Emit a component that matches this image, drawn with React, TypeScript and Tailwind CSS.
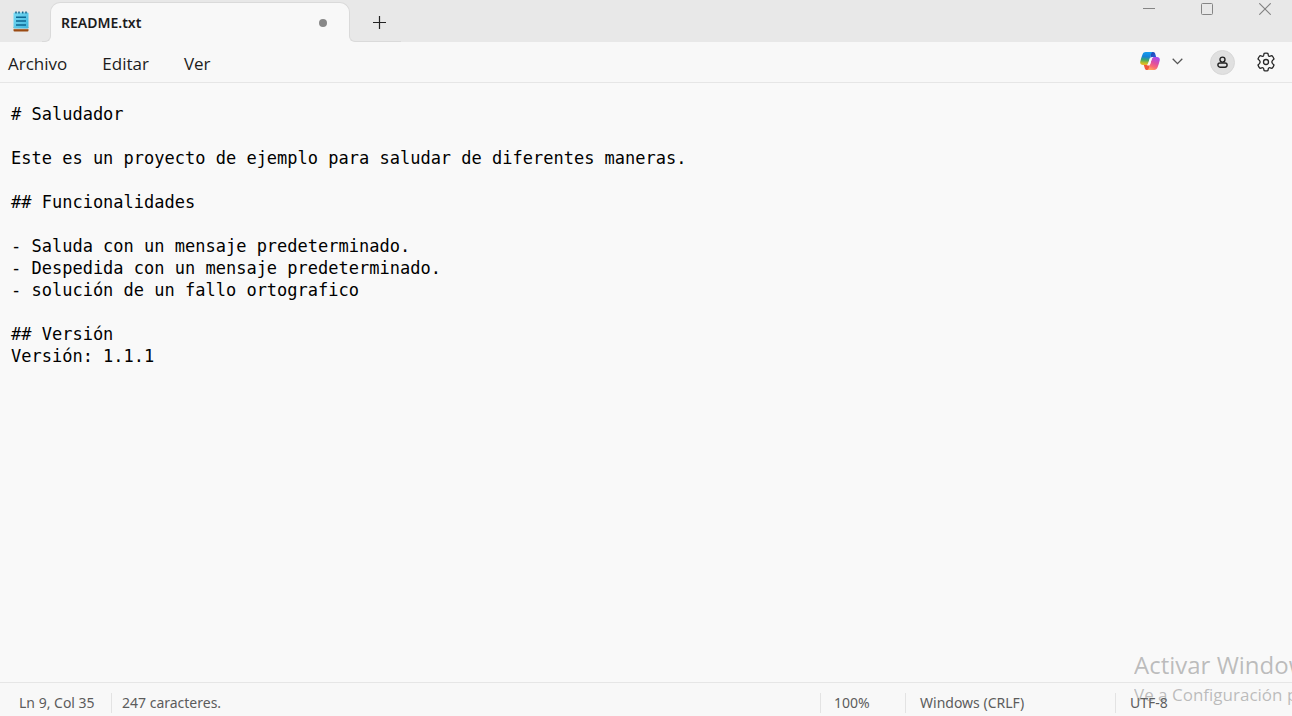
import { useState } from "react";
import type { ReactNode } from "react";

const initialText = `# Saludador

Este es un proyecto de ejemplo para saludar de diferentes maneras.

## Funcionalidades

- Saluda con un mensaje predeterminado.
- Despedida con un mensaje predeterminado.
- solución de un fallo ortografico

## Versión
Versión: 1.1.1`;

function NotepadIcon() {
  return (
    <svg width="16" height="21" viewBox="0 0 16 21" aria-hidden="true">
      <defs>
        <linearGradient id="paper" x1="0" y1="0" x2="1" y2="1">
          <stop offset="0" stopColor="#7adcf5" />
          <stop offset="1" stopColor="#3fb4dc" />
        </linearGradient>
      </defs>
      <rect x="0.5" y="16" width="15" height="4.5" rx="1" fill="#9a4a12" />
      <rect x="0" y="17" width="16" height="1.2" fill="#e8e0d8" />
      <rect x="0.5" y="1.5" width="15" height="16" rx="1" fill="url(#paper)" />
      <path d="M3 0.5v2M6 0.5v2M9.7 0.5v2M13 0.5v2" stroke="#14648c" strokeWidth="1.5" />
      <path d="M3 6.2h10M3 10h10M3 14h10" stroke="#0c6691" strokeWidth="1.6" />
    </svg>
  );
}

function CopilotIcon() {
  return (
    <svg width="20" height="20" viewBox="0 0 20 20" aria-hidden="true">
      <defs>
        <linearGradient id="cpLeft" x1="0.4" y1="0" x2="0.3" y2="1">
          <stop offset="0" stopColor="#159cf0" />
          <stop offset="0.35" stopColor="#1583d8" />
          <stop offset="0.6" stopColor="#3ba66e" />
          <stop offset="0.85" stopColor="#c5bd22" />
          <stop offset="1" stopColor="#f0b52c" />
        </linearGradient>
        <linearGradient id="cpRight" x1="0.7" y1="0" x2="0.3" y2="1">
          <stop offset="0" stopColor="#a64bf0" />
          <stop offset="0.45" stopColor="#df4f9f" />
          <stop offset="0.75" stopColor="#fb6c73" />
          <stop offset="1" stopColor="#ffac5a" />
        </linearGradient>
        <linearGradient id="cpFold" x1="0" y1="0" x2="1" y2="1">
          <stop offset="0" stopColor="#1c3fae" />
          <stop offset="1" stopColor="#2a67e0" />
        </linearGradient>
      </defs>
      <path d="M10 1h3.2c1.2 0 1.7.8 2 1.8l1 3.2h-3.2c-1.300 0-2 .7-2.400 2z" fill="url(#cpFold)" />
      <path d="M10 19H6.900c-1.200 0-1.800-.8-2.100-1.800L3.800 14H7c1.300 0 2-.7 2.400-2z" fill="#f2563a" />
      <path d="M5.700 1h7.200c-1 .2-1.500 1-1.900 2.200L8.300 11.700C7.700 13.500 7 14 5.400 14H3C.9 14-.2 12.600.3 10.500.8 8.200 1.600 5.700 2.500 3.400 3.200 1.700 4.200 1 5.700 1z" fill="url(#cpLeft)" />
      <path d="M14.300 19H7.100c1-.2 1.500-1 1.900-2.200l2.700-8.500C12.300 6.500 13 6 14.600 6H17c2.100 0 3.200 1.400 2.700 3.500-.5 2.300-1.300 4.800-2.200 7.100-.7 1.700-1.700 2.400-3.200 2.400z" fill="url(#cpRight)" />
      <path d="M12.300 6.200h1.500c-1.300.3-1.800 1-2.200 2.300l-1.500 4.700c-.3.900-1 1.300-1.800 1.300H6.700c1-.4 1.400-1.100 1.700-2.100l1.400-4.300c.4-1.300 1.100-1.900 2.500-1.900z" fill="#fafafa" />
    </svg>
  );
}

function GearIcon() {
  return (
    <svg width="20" height="20" viewBox="0 0 20 20" fill="none" stroke="#262626" strokeWidth="1.300" strokeLinejoin="round" aria-hidden="true">
      <path d="M8.100 1.400 Q10 1 11.900 1.400 L12.300 3.200 Q12.700 4.600 14.200 4.200 L16 3.600 Q17.400 5 18 7 L16.600 8.400 Q15.200 10 16.600 11.600 L18 13 Q17.400 15 16 16.400 L14.200 15.800 Q12.700 15.400 12.300 16.800 L11.900 18.600 Q10 19 8.100 18.600 L7.700 16.800 Q7.300 15.400 5.800 15.800 L4 16.400 Q2.600 15 2 13 L3.400 11.600 Q4.800 10 3.400 8.400 L2 7 Q2.600 5 4 3.600 L5.800 4.200 Q7.300 4.600 7.700 3.200 Z" />
      <circle cx="10" cy="10" r="2.500" />
    </svg>
  );
}

function StatusItem({ className, children }: { className: string; children: ReactNode }) {
  return (
    <div className={`flex h-5 items-center whitespace-nowrap ${className}`}>
      <span>{children}</span>
    </div>
  );
}

function TitleBar() {
  return (
    <header className="flex h-[42px] shrink-0 items-start bg-[#e8e8e8]">
      <div className="flex h-full w-[42px] items-center justify-center pt-px">
        <NotepadIcon />
      </div>
      <div className="flex h-full items-end">
        <div className="z-10 -mr-px h-2 w-[9px] bg-[#f8f8f8]">
          <div className="h-full rounded-br-md border-r border-b border-[#dadada] bg-[#e8e8e8]" />
        </div>
        <div className="flex h-10 w-[300px] items-center justify-between rounded-t-[10px] border-x border-t border-[#dadada] bg-[#f8f8f8] pr-[22px] pl-[10px]">
          <span className="text-[14px] leading-5 font-semibold text-[#1c1c1c]">README.txt</span>
          <span className="size-2 rounded-full bg-[#888888]" />
        </div>
        <div className="z-10 -ml-px h-2 w-[9px] bg-[#f8f8f8]">
          <div className="h-full rounded-bl-md border-b border-l border-[#dadada] bg-[#e8e8e8]" />
        </div>
        <button aria-label="Nueva pestaña" className="flex h-full w-[43px] items-center border-b border-[#dadada] pt-1 pl-[15px]">
          <svg width="13" height="13" viewBox="0 0 13 13" aria-hidden="true">
            <path d="M0 6.500h13M6.500 0v13" stroke="#222222" strokeWidth="1.200" />
          </svg>
        </button>
      </div>
      <div className="-mr-0.5 ml-auto flex">
        <button aria-label="Minimizar" className="flex h-[18px] w-[58px] items-center justify-center">
          <svg width="12" height="12" viewBox="0 0 12 12" aria-hidden="true">
            <path d="M0 5.500h12" stroke="#858585" />
          </svg>
        </button>
        <button aria-label="Maximizar" className="flex h-[18px] w-[58px] items-center justify-center">
          <svg width="12" height="12" viewBox="0 0 12 12" aria-hidden="true">
            <rect x="0.500" y="0.500" width="11" height="11" rx="1" fill="none" stroke="#858585" />
          </svg>
        </button>
        <button aria-label="Cerrar" className="flex h-[18px] w-[58px] items-center justify-center">
          <svg width="12" height="12" viewBox="0 0 12 12" aria-hidden="true">
            <path d="M0.300 0.300l11.400 11.400M11.700 0.300L0.300 11.700" stroke="#808080" strokeWidth="1.100" />
          </svg>
        </button>
      </div>
    </header>
  );
}

function MenuBar() {
  return (
    <div className="flex h-[41px] shrink-0 items-center border-b border-[#e6e6e6] bg-[#f8f8f8]">
      <nav className="flex items-center gap-[35px] pt-1 pl-2 font-['Open_Sans','Noto_Sans',sans-serif] text-[17px] leading-6 text-[#1c1c1c]">
        <button>Archivo</button>
        <button>Editar</button>
        <button>Ver</button>
      </nav>
      <div className="ml-auto flex items-center pr-4">
        <button aria-label="Copilot" className="flex items-center gap-3 pb-0.5">
          <CopilotIcon />
          <svg width="11" height="7" viewBox="0 0 11 7" fill="none" aria-hidden="true">
            <path d="M0.700 0.800l4.800 4.800 4.800-4.800" stroke="#555555" strokeWidth="1.300" />
          </svg>
        </button>
        <button aria-label="Cuenta" className="ml-[27px] flex size-[25px] items-center justify-center rounded-full border border-[#d8d8d8] bg-[#e0e0e0]">
          <svg width="11" height="12" viewBox="0 0 11 12" fill="none" stroke="#222222" strokeWidth="1.400" aria-hidden="true">
            <circle cx="5.500" cy="3.600" r="2.500" />
            <rect x="0.900" y="7" width="9.200" height="4.200" rx="2.100" />
          </svg>
        </button>
        <button aria-label="Configuración" className="ml-[21px]">
          <GearIcon />
        </button>
      </div>
    </div>
  );
}

export default function App() {
  const [text, setText] = useState(initialText);

  return (
    <div className="relative flex h-screen flex-col overflow-hidden bg-[#f9f9f9] font-['Noto_Sans','Open_Sans',sans-serif]">
      <TitleBar />
      <MenuBar />
      <textarea
        aria-label="Editor de texto"
        spellCheck={false}
        value={text}
        onChange={(e) => setText(e.target.value)}
        className="block min-h-0 w-full flex-1 resize-none bg-transparent px-[11px] pt-5 font-['DejaVu_Sans_Mono','Liberation_Mono',monospace] text-[17px] leading-[22px] text-black outline-none"
      />
      <footer className="flex h-[34px] shrink-0 items-center border-t border-[#e6e6e6] bg-[#f8f8f8] pt-1.5 text-[14px] leading-5 text-[#5c5c5c]">
        <StatusItem className="w-[112px] border-r border-[#e3e3e3] pl-[19px]">Ln 9, Col 35</StatusItem>
        <StatusItem className="pl-[10px]">247 caracteres.</StatusItem>
        <StatusItem className="ml-auto w-[85px] border-l border-[#e3e3e3] pl-[13px]">100%</StatusItem>
        <StatusItem className="w-[210px] border-l border-[#e3e3e3] pl-[14px]">Windows (CRLF)</StatusItem>
        <StatusItem className="w-[177px] border-l border-[#e3e3e3] pl-[14px]">UTF-8</StatusItem>
      </footer>
      <div className="pointer-events-none absolute right-0 bottom-0 h-[67px] w-[158px] overflow-hidden font-['Open_Sans','Noto_Sans',sans-serif] whitespace-nowrap text-[#7f7f7f]/50">
        <p className="text-[24px] leading-8">Activar Windows</p>
        <p className="text-[17px] leading-7">Ve a Configuración para activar Windows.</p>
      </div>
    </div>
  );
}
